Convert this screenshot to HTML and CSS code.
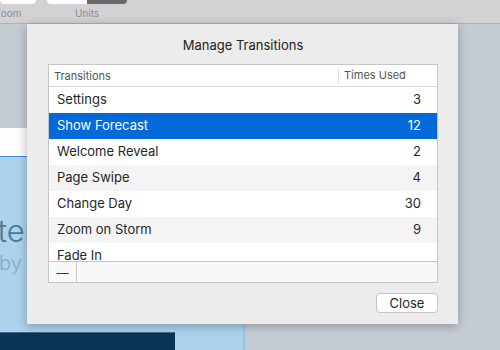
FILE: index.html
```html
<!DOCTYPE html>
<html lang="en">
<head>
  <meta charset="UTF-8">
  <meta name="viewport" content="width=device-width, initial-scale=1.0">
  <title>Manage Transitions</title>
  <link rel="stylesheet" href="styles.css">
</head>
<body>
  <div class="toolbar">
    <div class="tool tool-zoom">
      <div class="segments"><span class="seg"></span></div>
      <span class="tool-label">Zoom</span>
    </div>
    <div class="tool tool-units">
      <div class="segments"><span class="seg"></span><span class="seg seg-on"></span></div>
      <span class="tool-label">Units</span>
    </div>
  </div>

  <div class="workspace">
    <div class="preview">
      <div class="preview-top"></div>
      <div class="preview-nav"></div>
      <div class="preview-hero">
        <div class="hero-title">Forecaster</div>
        <div class="hero-byline">by Dark Sky</div>
        <div class="hero-footer"></div>
      </div>
    </div>
    <div class="backdrop"></div>

    <div class="sheet">
      <h1>Manage Transitions</h1>

      <div class="table">
        <div class="table-head">
          <div class="col-name">Transitions</div>
          <div class="col-count">Times Used</div>
        </div>
        <div class="table-body">
          <div class="row"><span>Settings</span><span>3</span></div>
          <div class="row selected"><span>Show Forecast</span><span>12</span></div>
          <div class="row"><span>Welcome Reveal</span><span>2</span></div>
          <div class="row"><span>Page Swipe</span><span>4</span></div>
          <div class="row"><span>Change Day</span><span>30</span></div>
          <div class="row"><span>Zoom on Storm</span><span>9</span></div>
          <div class="row"><span>Fade In</span><span></span></div>
        </div>
        <div class="table-foot">
          <button class="remove">—</button>
        </div>
      </div>

      <div class="actions">
        <button class="close">Close</button>
      </div>
    </div>
  </div>
</body>
</html>
```

FILE: styles.css
```css
body {
  margin: 0;
  width: 500px;
  height: 350px;
  overflow: hidden;
  font-family: Inter, Roboto, sans-serif;
  background: #c6ccd4;
  position: relative;
}
.toolbar {
  height: 23px;
  background: #d3d1d4;
  border-bottom: 1px solid #b3b1b4;
  display: flex;
  gap: 11px;
}
.tool {
  display: flex;
  flex-direction: column;
  align-items: center;
}
.tool-zoom {
  width: 36px;
}
.tool-units {
  width: 80px;
}
.segments {
  display: flex;
  width: 100%;
  height: 4px;
  border-radius: 0 0 5px 5px;
  overflow: hidden;
}
.seg {
  flex: 1;
  background: #fdfdfd;
}
.seg-on {
  background: #6a686b;
}
.tool-label {
  margin-top: 3px;
  font-size: 10px;
  line-height: 12px;
  color: #8e8c8f;
}
.tool-zoom .tool-label {
  margin-right: 20px;
}
.workspace {
  display: flex;
  height: 326px;
}
.preview {
  width: 243px;
  display: flex;
  flex-direction: column;
  border-right: 2px solid #9cc4e2;
}
.preview-top {
  height: 104px;
  background: #c4cbd3;
}
.preview-nav {
  height: 28px;
  background: #fdfdfe;
  border-bottom: 1px solid #3f8fdc;
}
.preview-hero {
  flex: 1;
  background: #acd2ec;
  display: flex;
  flex-direction: column;
}
.hero-title {
  margin: 56px 0 0 -117px;
  font-size: 31px;
  font-weight: 300;
  line-height: 36px;
  color: #4c7896;
  white-space: nowrap;
}
.hero-byline {
  margin: 2px 0 0 -1px;
  font-size: 20px;
  font-weight: 300;
  line-height: 24px;
  color: #87abc5;
  white-space: nowrap;
}
.hero-footer {
  margin-top: auto;
  width: 175px;
  height: 17px;
  background: #0b3356;
  border-top: 1px solid #3b6a92;
}
.backdrop {
  flex: 1;
}
.sheet {
  position: absolute;
  left: 27px;
  top: 24px;
  width: 431px;
  height: 300px;
  box-sizing: border-box;
  padding: 13px 20px 0 21px;
  background: #ececec;
  box-shadow: 0 2px 10px rgba(0, 0, 0, 0.28);
}
h1 {
  margin: 0;
  font-size: 13px;
  font-weight: 400;
  line-height: 16px;
  text-align: center;
  color: #222;
}
.table {
  margin-top: 11px;
  border: 1px solid #c6c6c6;
  background: #fff;
}
.table-head {
  display: flex;
  height: 21px;
  align-items: center;
  border-bottom: 1px solid #d6d6d6;
  font-size: 11px;
  color: #555;
}
.col-name {
  flex: 1;
  padding-left: 5px;
}
.col-count {
  width: 93px;
  padding-left: 5px;
  border-left: 1px solid #e2e2e2;
  line-height: 17px;
}
.table-body {
  height: 174px;
  overflow: hidden;
}
.row {
  display: flex;
  justify-content: space-between;
  align-items: center;
  height: 26px;
  box-sizing: border-box;
  padding: 0 16px 2px 8px;
  font-size: 13px;
  color: #262626;
}
.row:nth-child(even) {
  background: #f4f4f4;
}
.row.selected {
  background: #0469d9;
  color: #fff;
}
.table-foot {
  display: flex;
  height: 20px;
  border-top: 1px solid #c6c6c6;
  background: #f8f8f8;
}
.remove {
  width: 28px;
  padding: 0;
  border: none;
  border-right: 1px solid #c6c6c6;
  background: transparent;
  font-family: inherit;
  font-size: 12px;
  color: #333;
}
.actions {
  display: flex;
  justify-content: flex-end;
  margin-top: 10px;
}
.close {
  width: 62px;
  height: 20px;
  padding: 0;
  border: 1px solid #c4c4c4;
  border-radius: 4px;
  background: #fff;
  font-family: inherit;
  font-size: 13px;
  color: #262626;
}
```
